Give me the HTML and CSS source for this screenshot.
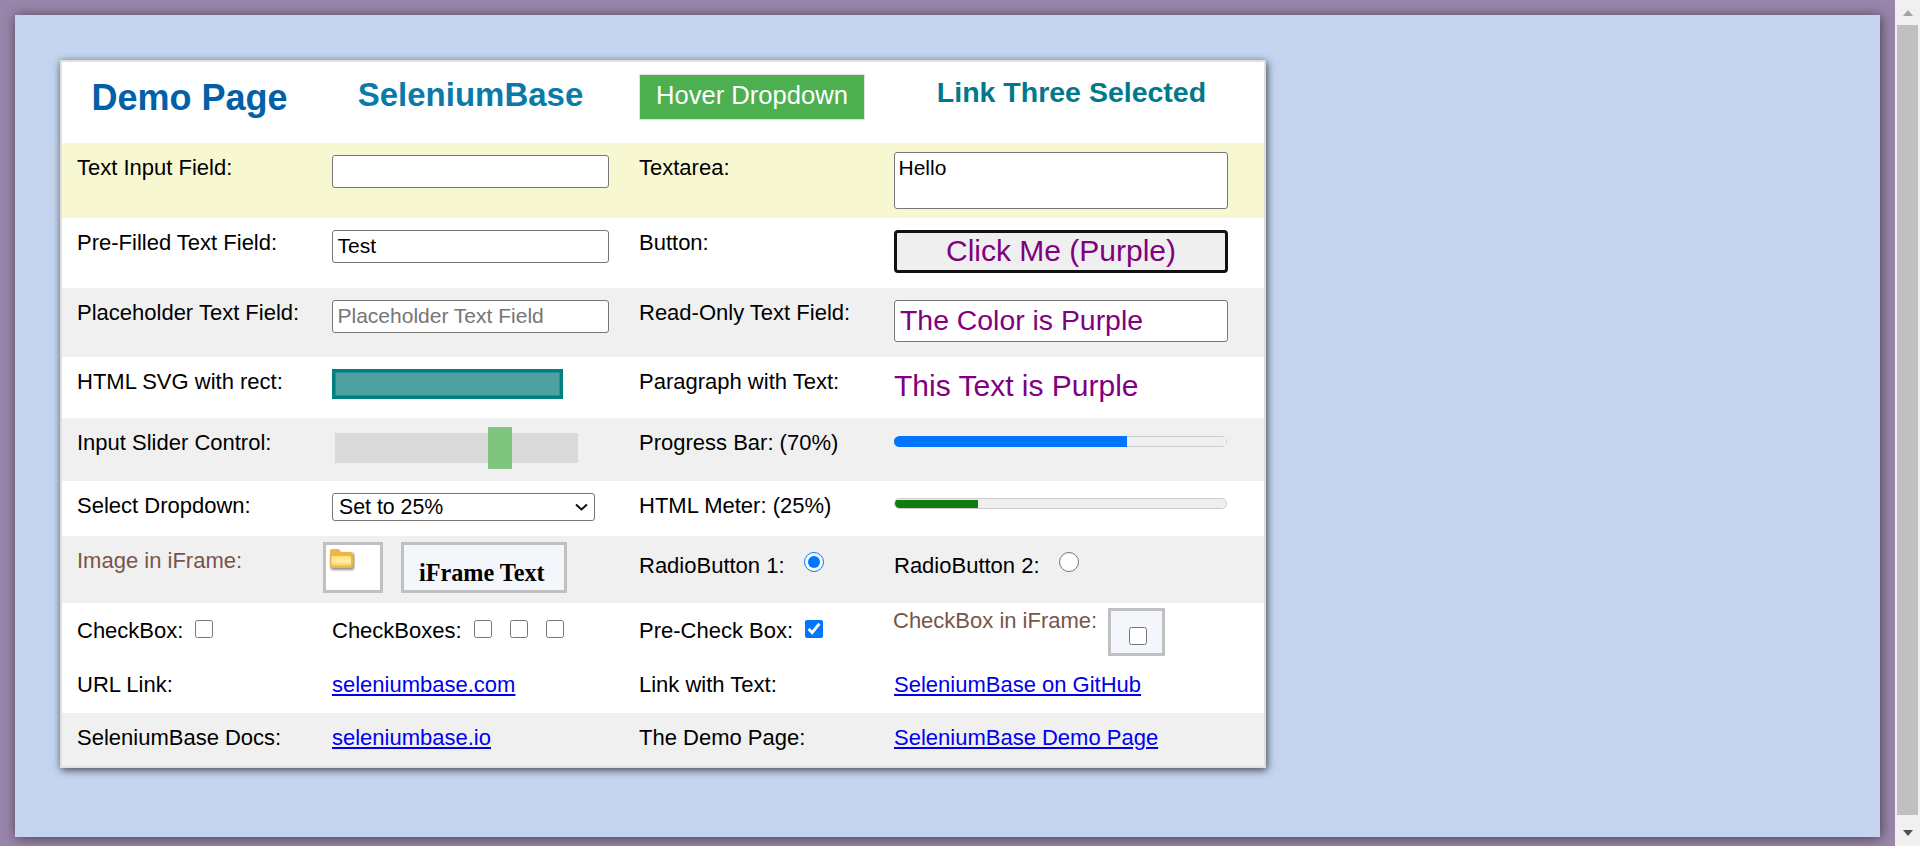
FILE: index.html
```html
<!DOCTYPE html>
<html lang="en">
<head>
    <meta charset="UTF-8">
    <meta name="viewport" content="width=device-width, initial-scale=1.0">
    <title>Web Testing Page</title>
    <link rel="stylesheet" href="styles.css">
</head>
<body>
    <div class="window">
        <div class="page">
            <form class="panel">
                <table class="demo-table">
                    <colgroup>
                        <col class="col-a">
                        <col class="col-b">
                        <col class="col-c">
                        <col class="col-d">
                    </colgroup>
                    <tr class="row-head">
                        <td class="head-cell"><h1 class="title-main">Demo Page</h1></td>
                        <td class="head-cell"><h2 class="title-sub">SeleniumBase</h2></td>
                        <td><div class="hover-box">Hover Dropdown</div></td>
                        <td class="head-cell"><h3 class="title-link">Link Three Selected</h3></td>
                    </tr>
                    <tr class="row-text">
                        <td>Text Input Field:</td>
                        <td><input class="field" type="text"></td>
                        <td>Textarea:</td>
                        <td class="wide-cell"><textarea class="area">Hello</textarea></td>
                    </tr>
                    <tr class="row-fill">
                        <td>Pre-Filled Text Field:</td>
                        <td><input class="field" type="text" value="Test"></td>
                        <td>Button:</td>
                        <td class="wide-cell"><button class="purple-btn" type="button">Click Me (Purple)</button></td>
                    </tr>
                    <tr class="row-place shaded">
                        <td>Placeholder Text Field:</td>
                        <td><input class="field" type="text" placeholder="Placeholder Text Field"></td>
                        <td>Read-Only Text Field:</td>
                        <td class="wide-cell"><input class="field readonly" type="text" value="The Color is Purple" readonly></td>
                    </tr>
                    <tr class="row-svg">
                        <td>HTML SVG with rect:</td>
                        <td>
                            <svg class="rect-svg" width="231" height="30" viewBox="0 0 231 30">
                                <rect x="1.75" y="1.75" width="227.5" height="26.5" fill="#4ea1a1" stroke="#008080" stroke-width="3.5"></rect>
                            </svg>
                        </td>
                        <td>Paragraph with Text:</td>
                        <td><p class="purple-text">This Text is Purple</p></td>
                    </tr>
                    <tr class="row-slider shaded">
                        <td>Input Slider Control:</td>
                        <td><input class="slider" type="range" min="0" max="100" value="70"></td>
                        <td>Progress Bar: (70%)</td>
                        <td><progress class="bar" value="70" max="100"></progress></td>
                    </tr>
                    <tr class="row-select">
                        <td>Select Dropdown:</td>
                        <td>
                            <select class="dropdown">
                                <option>Set to 25%</option>
                                <option>Set to 50%</option>
                                <option>Set to 75%</option>
                                <option>Set to 100%</option>
                            </select>
                        </td>
                        <td>HTML Meter: (25%)</td>
                        <td><meter class="meter-bar" value="0.25"></meter></td>
                    </tr>
                    <tr class="row-frame shaded">
                        <td class="brown">Image in iFrame:</td>
                        <td class="frames-cell">
                            <div class="frame frame-img">
                                <svg width="26" height="24" viewBox="0 0 26 24">
                                    <defs>
                                        <linearGradient id="folderFill" x1="0" y1="0" x2="0" y2="1">
                                            <stop offset="0" stop-color="#ffe27a"></stop>
                                            <stop offset="0.6" stop-color="#fff0a6"></stop>
                                            <stop offset="1" stop-color="#f5c84a"></stop>
                                        </linearGradient>
                                        <filter id="folderShadow" x="-20%" y="-20%" width="140%" height="140%">
                                            <feGaussianBlur stdDeviation="0.9"></feGaussianBlur>
                                        </filter>
                                    </defs>
                                    <rect x="1.5" y="5" width="24" height="17" rx="3" fill="#5a5a5a" opacity="0.65" filter="url(#folderShadow)"></rect>
                                    <path d="M3 1h6c1.5 0 2 1 3 3h9a3 3 0 0 1 3 3v10a3 3 0 0 1-3 3H4a3 3 0 0 1-3-3V3a2 2 0 0 1 2-2z" fill="#eeb64a"></path>
                                    <path d="M4 8h16.5a1.5 1.5 0 0 1 1.5 1.5v7a1.5 1.5 0 0 1-1.5 1.5H4a1.5 1.5 0 0 1-1.5-1.5v-7A1.5 1.5 0 0 1 4 8z" fill="url(#folderFill)"></path>
                                </svg>
                            </div>
                            <div class="frame frame-text">iFrame Text</div>
                        </td>
                        <td><div class="check-line radio-line">RadioButton 1:<input class="radio" type="radio" name="radio" checked></div></td>
                        <td><div class="check-line radio-line">RadioButton 2:<input class="radio" type="radio" name="radio"></div></td>
                    </tr>
                    <tr class="row-check">
                        <td><div class="check-line">CheckBox:<input class="check" type="checkbox"></div></td>
                        <td>
                            <div class="check-line">
                                CheckBoxes:
                                <input class="check" type="checkbox">
                                <input class="check check-next" type="checkbox">
                                <input class="check check-next" type="checkbox">
                            </div>
                        </td>
                        <td><div class="check-line">Pre-Check Box:<input class="check" type="checkbox" checked></div></td>
                        <td class="frames-cell">
                            <span class="brown frame-label">CheckBox in iFrame:</span>
                            <div class="frame frame-check"><input class="check" type="checkbox"></div>
                        </td>
                    </tr>
                    <tr class="row-link">
                        <td>URL Link:</td>
                        <td><a href="#">seleniumbase.com</a></td>
                        <td>Link with Text:</td>
                        <td><a href="#">SeleniumBase on GitHub</a></td>
                    </tr>
                    <tr class="row-docs shaded">
                        <td>SeleniumBase Docs:</td>
                        <td><a href="#">seleniumbase.io</a></td>
                        <td>The Demo Page:</td>
                        <td><a href="#">SeleniumBase Demo Page</a></td>
                    </tr>
                </table>
            </form>
        </div>
        <div class="scrollbar">
            <span class="arrow-up"></span>
            <span class="thumb"></span>
            <span class="arrow-down"></span>
        </div>
    </div>
</body>
</html>
```

FILE: styles.css
```css
html, body {
    margin: 0;
    height: 100%;
    overflow: hidden;
}
body {
    font-family: "Liberation Sans", Arial, sans-serif;
    font-size: 22px;
    background-color: #9a86ac;
    color: black;
}
.window {
    display: flex;
    height: 846px;
}
.page {
    flex: 1;
    padding: 15px 15px 9px 15px;
    display: flex;
}
.panel {
    flex: 1;
    background-color: #c5d5ef;
    box-shadow: 1px 1px 12px rgba(0, 0, 0, 0.55);
    padding: 45px;
    box-sizing: border-box;
}
.demo-table {
    width: 1206px;
    table-layout: fixed;
    border-collapse: separate;
    border-spacing: 0;
    border: 2px solid #e0e0e0;
    background: white;
    box-shadow: 1px 2px 8px rgba(0, 0, 0, 0.7);
    line-height: 25px;
}
.col-a { width: 255px; }
.col-b { width: 307px; }
.col-c { width: 255px; }
.col-d { width: 385px; }
td {
    padding: 12px 15px 0;
    vertical-align: top;
}
.wide-cell { padding-right: 36px; }
.shaded { background-color: #f0f0f0; }
.row-head { height: 81px; }
.row-text { height: 75px; background-color: #f7f7d1; }
.row-fill { height: 70px; }
.row-place { height: 69px; }
.row-svg { height: 61px; }
.row-slider { height: 63px; }
.row-select { height: 55px; }
.row-frame { height: 67px; }
.row-check { height: 55px; }
.row-link { height: 55px; }
.row-docs { height: 53px; }
.row-link td { padding-top: 14px; }

.head-cell {
    text-align: center;
    padding-left: 0;
    padding-right: 0;
}
h1, h2, h3 { margin: 0; }
.title-main {
    font-size: 36px;
    line-height: 48px;
    color: #0060a8;
}
.title-sub {
    font-size: 33px;
    line-height: 42px;
    color: #0a7ba8;
}
.title-link {
    font-size: 28.5px;
    line-height: 37px;
    color: #00798c;
}
.hover-box {
    display: flex;
    align-items: center;
    justify-content: center;
    box-sizing: border-box;
    width: 226px;
    height: 46px;
    padding-bottom: 4px;
    background-color: #4caf50;
    border: 1px solid #e0e0e0;
    color: white;
    font-size: 25.6px;
}

.field, .area, .purple-btn, .dropdown {
    display: block;
    box-sizing: border-box;
    font-family: inherit;
}
.field {
    width: 100%;
    height: 33px;
    font-size: 21px;
    padding: 0 4.5px 2px;
    border: 1px solid #767676;
    border-radius: 3px;
    background: white;
}
.field::placeholder { color: #757575; }
.readonly {
    height: 42px;
    padding: 0 5px 2px;
    font-size: 28.4px;
    color: purple;
}
.area {
    width: 100%;
    height: 57px;
    margin-top: -3px;
    padding: 3px 3.5px;
    font-size: 21px;
    border: 1px solid #767676;
    border-radius: 3px;
    resize: none;
}
.purple-btn {
    width: 100%;
    height: 43px;
    padding: 0 0 2px;
    font-size: 30px;
    color: purple;
    background-color: #efefef;
    border: 3px solid #111;
    border-radius: 4px;
}
.rect-svg { display: block; }
.purple-text {
    margin: 0;
    font-size: 30px;
    line-height: 34px;
    color: purple;
}
.slider {
    display: block;
    appearance: none;
    width: 243px;
    height: 30px;
    margin: 3px 0 0 3px;
    background: #dadada;
    outline: none;
}
.slider::-webkit-slider-thumb {
    appearance: none;
    width: 24px;
    height: 42px;
    background: #7fc47f;
}
.bar, .meter-bar {
    display: block;
    box-sizing: border-box;
    width: 333px;
    height: 11px;
    appearance: none;
    border-radius: 6px;
    background: #efefef;
    overflow: hidden;
}
.bar {
    margin-top: 6px;
    border: 0;
}
.bar::-webkit-progress-bar {
    background: #efefef;
    box-shadow: inset 0 0 0 1px #cccccc;
}
.bar::-webkit-progress-value { background: #0075ff; }
.meter-bar {
    margin-top: 5px;
    padding: 1px 0;
    border: 1px solid #cccccc;
}
.meter-bar::-webkit-meter-bar {
    background: #efefef;
    border: 0;
    height: 8px;
}
.meter-bar::-webkit-meter-optimum-value { background: #107c10; }
.dropdown {
    appearance: none;
    width: 263px;
    height: 28px;
    padding: 0 24px 0 6px;
    font-size: 21.3px;
    border: 1px solid #767676;
    border-radius: 3px;
    background: white url("data:image/svg+xml,%3Csvg xmlns='http://www.w3.org/2000/svg' width='13' height='8' viewBox='0 0 13 8'%3E%3Cpath d='M1 1.5l5.5 5 5.5-5' fill='none' stroke='%23111' stroke-width='2'/%3E%3C/svg%3E") no-repeat right 6px center;
}

.brown { color: #795548; }
.frames-cell {
    display: flex;
    align-items: flex-start;
    padding: 6px 0 0 6px;
    gap: 18px;
}
.frame {
    box-sizing: border-box;
    border: 3.5px solid #c0c0c0;
    height: 51px;
}
.frame svg { display: block; margin: 2.5px 0 0 2.5px; }
.frame-img {
    width: 60px;
    background: white;
}
.frame-text {
    width: 166px;
    padding: 15px 0 0 15px;
    line-height: 26px;
    background: #f3f6fa;
    font-family: "Liberation Serif", "Times New Roman", serif;
    font-weight: bold;
    font-size: 24.2px;
}
.check-line {
    display: flex;
    align-items: flex-start;
    padding-top: 3px;
}
.radio-line { padding-top: 5px; }
.radio {
    width: 20px;
    height: 20px;
    margin: -1px 0 0 19px;
}
.check {
    width: 18px;
    height: 18px;
    margin: 2px 0 0 12px;
}
.check-next { margin-left: 18px; }
.row-check .frames-cell {
    padding: 5px 0 0 14px;
    gap: 11px;
}
.frame-label { margin-top: 0; }
.frame-check {
    width: 57px;
    height: 48px;
    background: #f3f6fa;
    padding: 16px 0 0 18px;
}
.frame-check .check { display: block; margin: 0; }

a { color: #0000ee; }

.scrollbar {
    flex: none;
    width: 25px;
    background-color: #f0f0f0;
    display: flex;
    flex-direction: column;
    align-items: center;
    box-sizing: border-box;
    padding-top: 10px;
}
.arrow-up {
    width: 0;
    height: 0;
    border: 5.5px solid transparent;
    border-top: 0;
    border-bottom: 6px solid #a3a3a3;
}
.thumb {
    width: 21px;
    height: 790px;
    margin: 9px 0 15px;
    background-color: #c0c0c0;
}
.arrow-down {
    width: 0;
    height: 0;
    border: 5.5px solid transparent;
    border-bottom: 0;
    border-top: 6px solid #505050;
}
```
